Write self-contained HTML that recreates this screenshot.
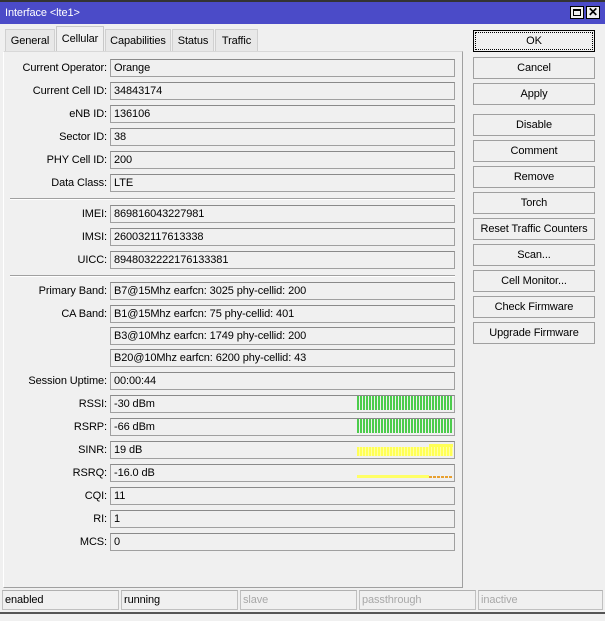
<!DOCTYPE html>
<html><head><style>
*{margin:0;padding:0;box-sizing:border-box}
body{width:605px;height:621px;background:#f0f0f0;font-family:"Liberation Sans",sans-serif;font-size:11px;color:#000;position:relative;overflow:hidden;letter-spacing:-0.1px}
.a{position:absolute}
.title{left:0;top:0;width:605px;height:24px;background:#4b4bc8;border-top:2px solid #333;color:#fff;font-size:11px;line-height:22px;padding-left:5px}
.wb{top:6px;width:14px;height:13px;background:#f0f0f0;border:1px solid #000}
.tab{top:29px;height:22px;border:1px solid #d0d0d0;border-bottom:none;background:#e8e8e8;line-height:22px;text-align:center}
.panel{left:3px;top:51px;width:460px;height:537px;border:1px solid #a0a0a0;border-top:1px solid #d8d8d8;border-left:1px solid #fff}
.lb{width:107px;left:0;text-align:right;height:18px;line-height:18px}
.f{left:110px;width:345px;height:18px;border:1px solid #a0a0a0;border-top-color:#8a8a8a;background:#f0f0f0;line-height:16px;padding-left:3px}
.sep{left:10px;width:445px;height:2px;border-top:1px solid #a0a0a0;border-bottom:1px solid #fff}
.btn{left:473px;width:122px;height:22px;border:1px solid #a0a0a0;background:#f0f0f0;text-align:center;line-height:20px}
.st{top:590px;height:20px;border:1px solid #c0c0c0;border-top-color:#b0b0b0;line-height:18px;padding-left:2px;width:117px}
.g{left:357px;width:96px;height:14px;background:repeating-linear-gradient(90deg,#4ccc4c 0 2px,transparent 2px 3px)}
</style></head><body>
<div class="a title">Interface &lt;lte1&gt;</div>
<div class="a wb" style="left:570px"><div style="position:absolute;left:2px;top:2px;width:8px;height:7px;border:1px solid #000;border-top-width:2px"></div></div>
<div class="a wb" style="left:586px;text-align:center;line-height:11px;font-weight:bold;font-size:12px">✕</div>

<div class="a tab" style="left:5px;width:50px">General</div>
<div class="a tab" style="left:56px;width:48px;top:26px;height:26px;background:#f0f0f0;border-color:#c8c8c8;line-height:24px">Cellular</div>
<div class="a tab" style="left:105px;width:66px">Capabilities</div>
<div class="a tab" style="left:172px;width:42px">Status</div>
<div class="a tab" style="left:215px;width:43px">Traffic</div>
<div class="a panel"></div>

<div class="a lb" style="top:59px">Current Operator:</div><div class="a f" style="top:59px">Orange</div>
<div class="a lb" style="top:82px">Current Cell ID:</div><div class="a f" style="top:82px">34843174</div>
<div class="a lb" style="top:105px">eNB ID:</div><div class="a f" style="top:105px">136106</div>
<div class="a lb" style="top:128px">Sector ID:</div><div class="a f" style="top:128px">38</div>
<div class="a lb" style="top:151px">PHY Cell ID:</div><div class="a f" style="top:151px">200</div>
<div class="a lb" style="top:174px">Data Class:</div><div class="a f" style="top:174px">LTE</div>
<div class="a sep" style="top:198px"></div>
<div class="a lb" style="top:205px">IMEI:</div><div class="a f" style="top:205px">869816043227981</div>
<div class="a lb" style="top:228px">IMSI:</div><div class="a f" style="top:228px">260032117613338</div>
<div class="a lb" style="top:251px">UICC:</div><div class="a f" style="top:251px">8948032222176133381</div>
<div class="a sep" style="top:275px"></div>
<div class="a lb" style="top:282px">Primary Band:</div><div class="a f" style="top:282px">B7@15Mhz earfcn: 3025 phy-cellid: 200</div>
<div class="a lb" style="top:305px">CA Band:</div><div class="a f" style="top:305px">B1@15Mhz earfcn: 75 phy-cellid: 401</div>
<div class="a f" style="top:327px">B3@10Mhz earfcn: 1749 phy-cellid: 200</div>
<div class="a f" style="top:349px">B20@10Mhz earfcn: 6200 phy-cellid: 43</div>
<div class="a lb" style="top:372px">Session Uptime:</div><div class="a f" style="top:372px">00:00:44</div>
<div class="a lb" style="top:395px">RSSI:</div><div class="a f" style="top:395px">-30 dBm</div><div class="a g" style="top:396px"></div>
<div class="a lb" style="top:418px">RSRP:</div><div class="a f" style="top:418px">-66 dBm</div><div class="a g" style="top:419px"></div>
<div class="a lb" style="top:441px">SINR:</div><div class="a f" style="top:441px">19 dB</div>
<div class="a" style="left:357px;top:447px;width:96px;height:9px;background:repeating-linear-gradient(90deg,#ffff55 0 2px,#ffffa0 2px 3px)"></div>
<div class="a" style="left:429px;top:444px;width:24px;height:3px;background:#ffff55"></div>
<div class="a lb" style="top:464px">RSRQ:</div><div class="a f" style="top:464px">-16.0 dB</div>
<div class="a" style="left:357px;top:475px;width:72px;height:3px;background:#ffff66"></div>
<div class="a" style="left:429px;top:476px;width:24px;height:2px;background:repeating-linear-gradient(90deg,#e8a030 0 3px,transparent 3px 4px)"></div>
<div class="a lb" style="top:487px">CQI:</div><div class="a f" style="top:487px">11</div>
<div class="a lb" style="top:510px">RI:</div><div class="a f" style="top:510px">1</div>
<div class="a lb" style="top:533px">MCS:</div><div class="a f" style="top:533px">0</div>

<div class="a btn" style="top:30px;border:1px solid #000;outline:1px dotted #000;outline-offset:-3px">OK</div>
<div class="a btn" style="top:57px">Cancel</div>
<div class="a btn" style="top:83px">Apply</div>
<div class="a btn" style="top:114px">Disable</div>
<div class="a btn" style="top:140px">Comment</div>
<div class="a btn" style="top:166px">Remove</div>
<div class="a btn" style="top:192px">Torch</div>
<div class="a btn" style="top:218px">Reset Traffic Counters</div>
<div class="a btn" style="top:244px">Scan...</div>
<div class="a btn" style="top:270px">Cell Monitor...</div>
<div class="a btn" style="top:296px">Check Firmware</div>
<div class="a btn" style="top:322px">Upgrade Firmware</div>

<div class="a st" style="left:2px">enabled</div>
<div class="a st" style="left:121px">running</div>
<div class="a st" style="left:240px;color:#a8a8a8">slave</div>
<div class="a st" style="left:359px;color:#a8a8a8">passthrough</div>
<div class="a st" style="left:478px;width:125px;color:#a8a8a8">inactive</div>
<div class="a" style="left:0;top:612px;width:605px;height:2px;background:#555"></div>
</body></html>
